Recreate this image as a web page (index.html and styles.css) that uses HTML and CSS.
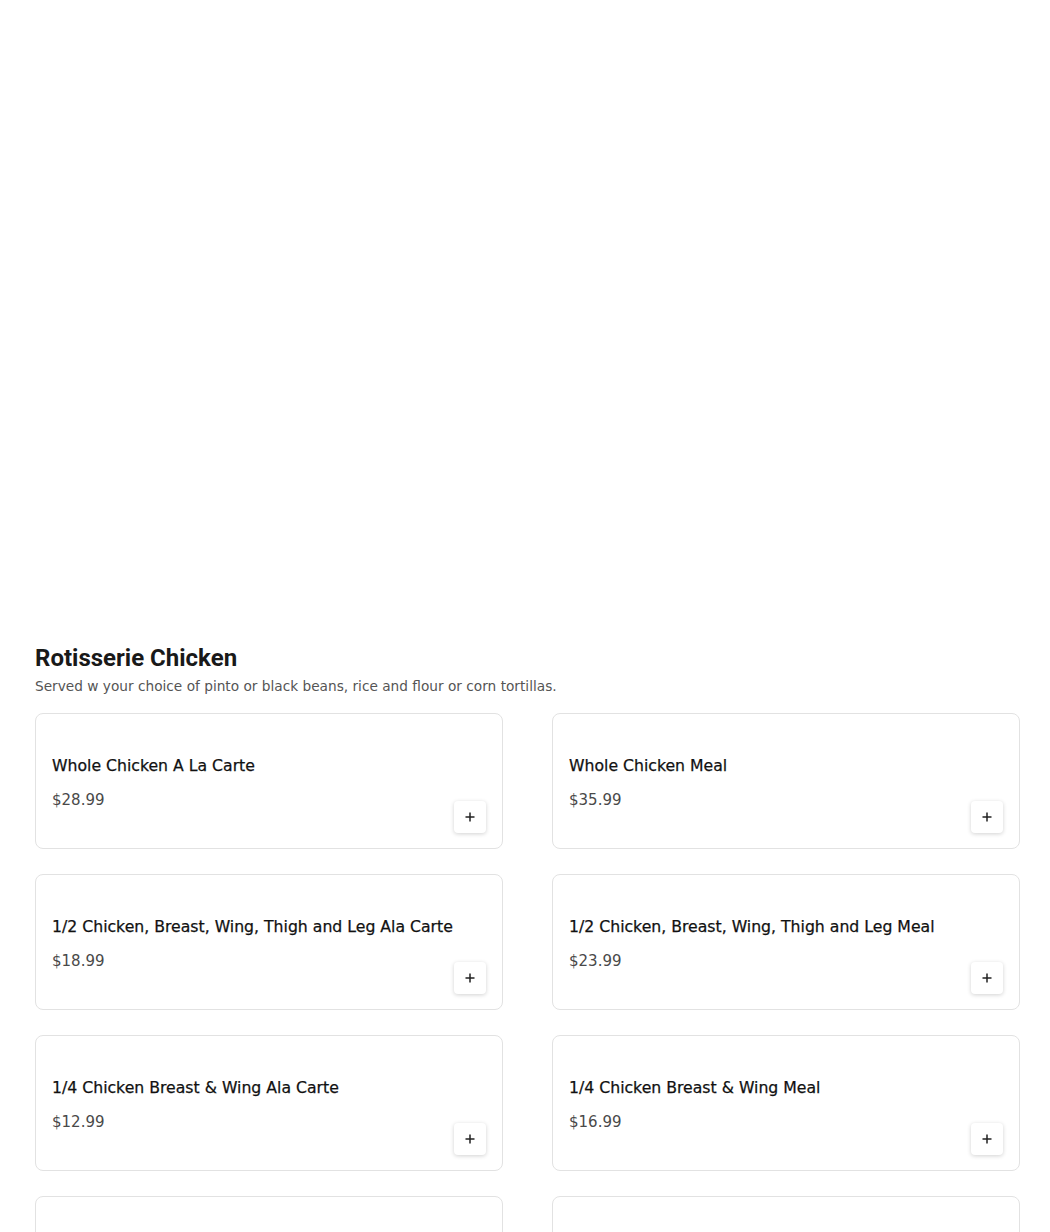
FILE: index.html
```html
<!doctype html>
<html lang="en">
<head>
<meta charset="utf-8">
<title>Rotisserie Chicken</title>
<link rel="stylesheet" href="styles.css">
</head>
<body>

<div id="menu">

	<div class="hero"></div>

	<div class="section">
		<h2>Rotisserie Chicken</h2>
		<p class="desc">Served w your choice of pinto or black beans, rice and flour or corn tortillas.</p>

		<div class="items">

			<div class="item">
				<div class="info">
					<h3>Whole Chicken A La Carte</h3>
					<span class="price">$28.99</span>
				</div>
				<button class="add"><svg viewBox="0 0 10 10"><path d="M5 0.5v9M0.5 5h9"/></svg></button>
			</div>

			<div class="item">
				<div class="info">
					<h3>Whole Chicken Meal</h3>
					<span class="price">$35.99</span>
				</div>
				<button class="add"><svg viewBox="0 0 10 10"><path d="M5 0.5v9M0.5 5h9"/></svg></button>
			</div>

			<div class="item">
				<div class="info">
					<h3>1/2 Chicken, Breast, Wing, Thigh and Leg Ala Carte</h3>
					<span class="price">$18.99</span>
				</div>
				<button class="add"><svg viewBox="0 0 10 10"><path d="M5 0.5v9M0.5 5h9"/></svg></button>
			</div>

			<div class="item">
				<div class="info">
					<h3>1/2 Chicken, Breast, Wing, Thigh and Leg Meal</h3>
					<span class="price">$23.99</span>
				</div>
				<button class="add"><svg viewBox="0 0 10 10"><path d="M5 0.5v9M0.5 5h9"/></svg></button>
			</div>

			<div class="item">
				<div class="info">
					<h3>1/4 Chicken Breast &amp; Wing Ala Carte</h3>
					<span class="price">$12.99</span>
				</div>
				<button class="add"><svg viewBox="0 0 10 10"><path d="M5 0.5v9M0.5 5h9"/></svg></button>
			</div>

			<div class="item">
				<div class="info">
					<h3>1/4 Chicken Breast &amp; Wing Meal</h3>
					<span class="price">$16.99</span>
				</div>
				<button class="add"><svg viewBox="0 0 10 10"><path d="M5 0.5v9M0.5 5h9"/></svg></button>
			</div>

			<div class="item">
				<div class="info">
					<h3>1/4 Chicken Thigh &amp; Leg Ala Carte</h3>
					<span class="price">$11.99</span>
				</div>
				<button class="add"><svg viewBox="0 0 10 10"><path d="M5 0.5v9M0.5 5h9"/></svg></button>
			</div>

			<div class="item">
				<div class="info">
					<h3>1/4 Chicken Thigh &amp; Leg Meal</h3>
					<span class="price">$15.99</span>
				</div>
				<button class="add"><svg viewBox="0 0 10 10"><path d="M5 0.5v9M0.5 5h9"/></svg></button>
			</div>

		</div>
	</div>

</div>

</body>
</html>
```

FILE: styles.css
```css
* { margin: 0; padding: 0; box-sizing: border-box; }
html, body { background: #fff; }

body {
	font-family: 'DejaVu Sans', sans-serif;
	color: #191919;
}

#menu {
	padding: 0 30px 0 35px;
}

.hero { height: 642px; }

.section > h2 {
	font-family: Roboto, sans-serif;
	font-weight: 700;
	font-size: 24px;
	line-height: 32px;
	color: #191919;
}

.desc {
	font-size: 13.7px;
	line-height: 24px;
	color: #555;
	margin-bottom: 15px;
}

.items {
	display: grid;
	grid-template-columns: repeat(2, minmax(0, 1fr));
	column-gap: 49px;
	row-gap: 25px;
}

.item {
	display: flex;
	justify-content: space-between;
	align-items: flex-end;
	height: 136px;
	padding: 39px 16px 15px 16px;
	border: 1px solid #e2e2e2;
	border-radius: 8px;
}

.info { min-width: 0; }

.info > h3 {
	font-size: 15.7px;
	font-weight: 400;
	line-height: 24px;
	white-space: nowrap;
	color: #111;
	-webkit-text-stroke: 0.25px #111;
}

.price {
	display: block;
	margin-top: 11px;
	margin-bottom: 22px;
	font-size: 15px;
	line-height: 22px;
	color: #494949;
}

.add {
	display: flex;
	align-items: center;
	justify-content: center;
	width: 32px; height: 32px;
	flex-shrink: 0;
	border: none;
	border-radius: 4px;
	background: #fff;
	box-shadow: 0 1px 4px rgba(0,0,0,0.18);
}

.add > svg {
	width: 10px; height: 10px;
	stroke: #222;
	stroke-width: 1.5;
	fill: none;
}
```
